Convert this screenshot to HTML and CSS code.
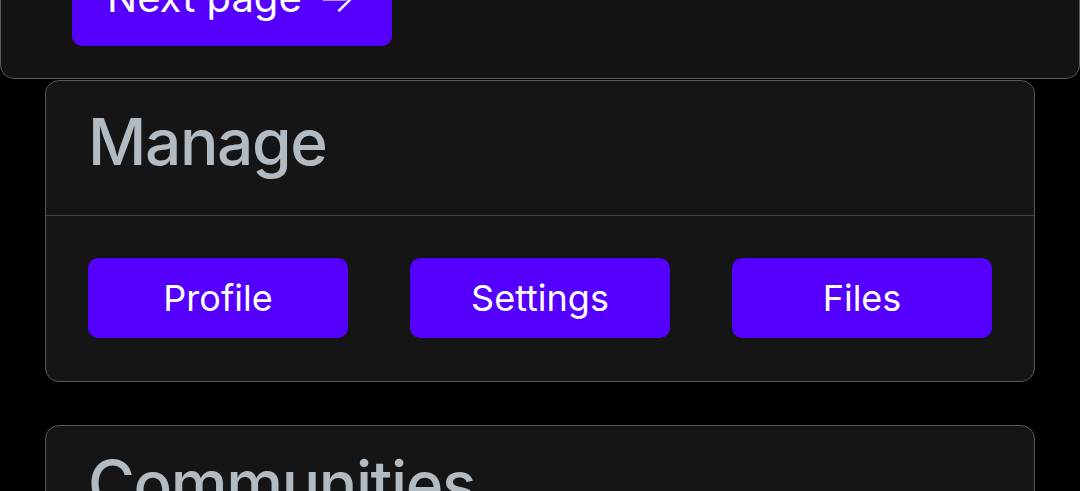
FILE: index.html
```html
<!DOCTYPE html>
<html lang="en">
<head>
<meta charset="utf-8">
<title>Dashboard</title>
<link rel="stylesheet" href="styles.css">
</head>
<body>
<main class="page">
  <section class="pager-card">
    <button class="next-btn" type="button">Next page <span class="arrow">→</span></button>
  </section>

  <section class="card">
    <header class="card-header"><h2 class="card-title">Manage</h2></header>
    <div class="card-body">
      <div class="btn-grid">
        <button class="action-btn" type="button">Profile</button>
        <button class="action-btn" type="button">Settings</button>
        <button class="action-btn" type="button">Files</button>
      </div>
    </div>
  </section>

  <section class="card card-communities">
    <header class="card-header"><h2 class="card-title">Communities</h2></header>
  </section>
</main>
</body>
</html>
```

FILE: styles.css
```css
html, body {
  margin: 0;
  padding: 0;
  background: #000;
}
body {
  font-family: Inter, "Noto Sans", "Liberation Sans", sans-serif;
  color: #fff;
  overflow: hidden;
}
.page {
  display: flex;
  flex-direction: column;
}
.pager-card {
  margin-top: -83px;
  background: #131313;
  border: 1px solid #575b61;
  border-radius: 14px;
  padding: 32px 71px;
}
.next-btn {
  display: inline-flex;
  align-items: center;
  gap: 16px;
  border: 0;
  background: #5500ff;
  color: #fff;
  font-family: inherit;
  font-size: 40px;
  line-height: 48px;
  padding: 24px 36px 24px 35px;
  border-radius: 10px;
}
.arrow {
  font-size: 40px;
  font-weight: 300;
}
.card {
  margin: 1px 45px 0;
  background: #151515;
  border: 1px solid #55585d;
  border-radius: 14px;
}
.card-communities {
  margin-top: 43px;
}
.card-header {
  padding: 22px 42px 35px;
  border-bottom: 1px solid #414448;
}
.card-communities .card-header {
  border-bottom: 0;
  padding-top: 19px;
}
.card-title {
  margin: 0;
  font-size: 64px;
  font-weight: 500;
  letter-spacing: -1.4px;
  line-height: normal;
  color: #b2bac2;
}
.card-body {
  padding: 42px 42px 43px;
}
.btn-grid {
  display: grid;
  grid-template-columns: repeat(3, 1fr);
  gap: 62px;
}
.action-btn {
  height: 80px;
  border: 0;
  border-radius: 10px;
  background: #5500ff;
  color: #fff;
  font-family: inherit;
  font-size: 36px;
  font-weight: 400;
  padding: 0;
}
```
